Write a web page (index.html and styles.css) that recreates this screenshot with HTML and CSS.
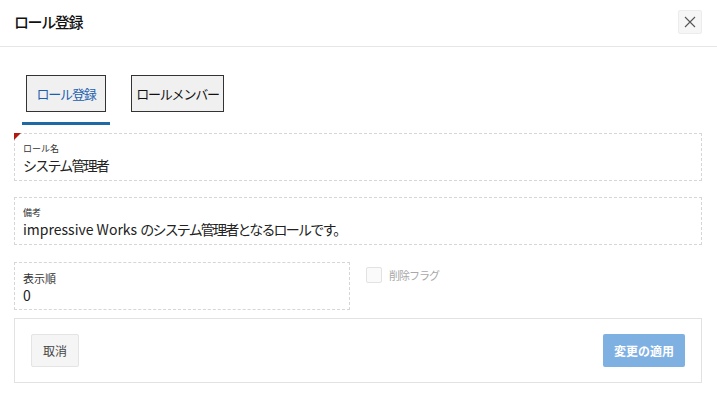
FILE: index.html
```html
<!DOCTYPE html>
<html lang="ja">
<head>
    <meta charset="UTF-8">
    <meta name="viewport" content="width=device-width, initial-scale=1.0">
    <title>ロール登録</title>
    <link rel="stylesheet" href="styles.css">
</head>
<body>
    <div class="dialog">
        <div class="header">
            <div class="title">ロール登録</div>
            <button class="close-btn" aria-label="close">
                <svg width="12" height="12" viewBox="0 0 12 12">
                    <path d="M1 1 L11 11 M11 1 L1 11" stroke="#555" stroke-width="1.1" fill="none"/>
                </svg>
            </button>
        </div>
        <div class="tabs">
            <div class="tab active"><span class="tab-btn tab-role">ロール登録</span></div>
            <div class="tab"><span class="tab-btn tab-member">ロールメンバー</span></div>
        </div>
        <div class="form">
            <div class="field required">
                <div class="field-label small">ロール名</div>
                <div class="field-value"><span class="jp">システム管理者</span></div>
            </div>
            <div class="field gap-lg">
                <div class="field-label small">備考</div>
                <div class="field-value">impressive Works <span class="jp">のシステム管理者となるロールです。</span></div>
            </div>
            <div class="field-row">
                <div class="field half">
                    <div class="field-label">表示順</div>
                    <div class="field-value">0</div>
                </div>
                <label class="check">
                    <span class="check-box"></span>
                    <span class="check-label">削除フラグ</span>
                </label>
            </div>
        </div>
        <div class="footer">
            <button class="btn btn-cancel">取消</button>
            <button class="btn btn-apply">変更の適用</button>
        </div>
    </div>
</body>
</html>
```

FILE: styles.css
```css
body {
    margin: 0;
    background-color: #ffffff;
    font-family: "Noto Sans CJK JP", "Noto Sans", sans-serif;
    color: #222222;
}
.dialog {
    width: 717px;
}
.header {
    display: flex;
    justify-content: space-between;
    align-items: center;
    height: 46px;
    padding: 0 15px 0 14px;
    border-bottom: 1px solid #e6e6e6;
}
.title {
    font-size: 15px;
    font-weight: 500;
    letter-spacing: -1.4px;
    color: #111111;
    margin-top: -4px;
}
.close-btn {
    width: 24px;
    height: 24px;
    padding: 0;
    margin-top: -3px;
    display: flex;
    align-items: center;
    justify-content: center;
    background-color: #f6f6f6;
    border: 1px solid #ececec;
    border-radius: 2px;
}
.tabs {
    display: flex;
    gap: 17px;
    padding: 28px 0 0 22px;
}
.tab {
    padding: 0 4px 10px;
    border-bottom: 3px solid transparent;
}
.tab.active {
    border-bottom-color: #1f6aa5;
}
.tab-btn {
    box-sizing: border-box;
    display: flex;
    align-items: center;
    justify-content: center;
    height: 37px;
    padding: 0;
    background-color: #f0f0f0;
    border: 1px solid #333333;
    font-size: 13px;
    letter-spacing: -1.2px;
    white-space: nowrap;
    color: #111111;
}
.tab-role {
    width: 80px;
}
.tab-member {
    width: 93px;
}
.tab.active .tab-btn {
    color: #1a5fb0;
}
.form {
    padding: 8px 15px 0 14px;
}
.field {
    position: relative;
    height: 46px;
    padding: 0 8px;
    border: 1px dashed #d6d6d6;
}
.field.required::before {
    content: "";
    position: absolute;
    top: -1px;
    left: -1px;
    border-top: 7px solid #b01a10;
    border-right: 7px solid transparent;
}
.gap-lg {
    margin-top: 16px;
}
.field-label {
    font-size: 11px;
    margin-top: 8px;
    line-height: 14px;
    color: #333333;
}
.field-label.small {
    font-size: 9px;
    margin-top: 9px;
    line-height: 12px;
}
.field-value {
    font-size: 14px;
    line-height: 20px;
    color: #222222;
}
.jp {
    letter-spacing: -1.8px;
}
.field-row {
    display: flex;
    align-items: flex-start;
    margin-top: 17px;
}
.half {
    width: 318px;
}
.check {
    display: flex;
    align-items: center;
    gap: 7px;
    margin: 5px 0 0 16px;
}
.check-box {
    width: 14px;
    height: 14px;
    border: 1px solid #e2e2e2;
    border-radius: 2px;
    background-color: #fafafa;
}
.check-label {
    font-size: 11px;
    letter-spacing: -1px;
    color: #a8a8a8;
}
.footer {
    display: flex;
    justify-content: space-between;
    align-items: center;
    margin: 8px 15px 0 14px;
    height: 63px;
    padding: 0 16px;
    border: 1px solid #e2e2e2;
}
.btn {
    height: 33px;
    font-family: inherit;
    font-size: 12px;
    border-radius: 2px;
}
.btn-cancel {
    width: 48px;
    background-color: #f5f5f5;
    border: 1px solid #e4e4e4;
    color: #444444;
}
.btn-apply {
    width: 82px;
    background-color: #7fb0e2;
    border: none;
    color: #ffffff;
    font-weight: bold;
}
```
